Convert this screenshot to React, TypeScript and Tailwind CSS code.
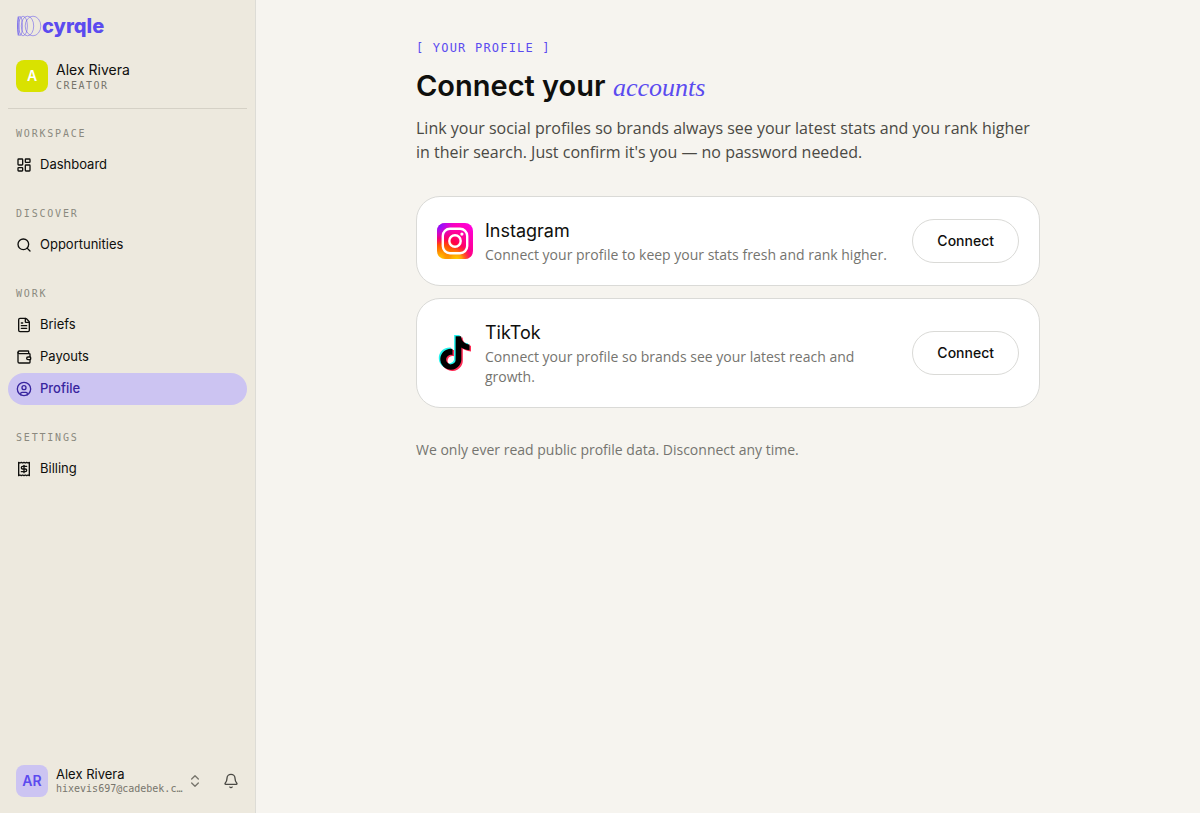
import type { ComponentType } from 'react';
import {
  Bell,
  ChevronsUpDown,
  CircleUser,
  FileText,
  LayoutDashboard,
  Search,
  Wallet,
} from 'lucide-react';

type IconProps = { className?: string };

function Logo() {
  return (
    <span className="flex items-center text-[#5B4BEF]">
      <svg viewBox="0 0 26 24" className="w-[26px] h-6" fill="none" stroke="currentColor" strokeWidth="0.5" aria-hidden="true">
        <ellipse cx="2.3" cy="12" rx="0.8" ry="9.5" />
        <ellipse cx="4" cy="12" rx="2.4" ry="9.7" />
        <ellipse cx="7" cy="12" rx="4.4" ry="9.8" />
        <ellipse cx="11.5" cy="12" rx="6.2" ry="9.8" />
        <ellipse cx="17" cy="12" rx="7.8" ry="9.8" />
      </svg>
      <span className="text-xl leading-6 font-extrabold">cyrqle</span>
    </span>
  );
}

function ReceiptDollar({ className }: IconProps) {
  return (
    <svg viewBox="0 0 24 24" className={className} fill="none" stroke="currentColor" strokeWidth="2" strokeLinecap="round" strokeLinejoin="round" aria-hidden="true">
      <path d="M4 2v20l2-1 2 1 2-1 2 1 2-1 2 1 2-1 2 1V2l-2 1-2-1-2 1-2-1-2 1-2-1-2 1Z" />
      <path d="M16 8h-6a2 2 0 1 0 0 4h4a2 2 0 1 1 0 4H8" />
      <path d="M12 17.5v-11" />
    </svg>
  );
}

function InstagramLogo() {
  return (
    <svg viewBox="0 0 36 36" className="size-9 shrink-0" aria-hidden="true">
      <defs>
        <radialGradient id="ig-base" cx="0.1" cy="1.05" r="1.25">
          <stop offset="0" stopColor="#FFD600" />
          <stop offset="0.14" stopColor="#FFA800" />
          <stop offset="0.34" stopColor="#FF5A00" />
          <stop offset="0.5" stopColor="#FF0045" />
          <stop offset="0.75" stopColor="#FF00A0" />
          <stop offset="1" stopColor="#FF00D8" />
        </radialGradient>
        <radialGradient id="ig-glow" cx="0.55" cy="1.02" r="0.42">
          <stop offset="0" stopColor="#FFD000" />
          <stop offset="0.35" stopColor="#FFB800" stopOpacity="0.85" />
          <stop offset="1" stopColor="#FF5A00" stopOpacity="0" />
        </radialGradient>
        <radialGradient id="ig-corner" cx="0" cy="0" r="0.6">
          <stop offset="0" stopColor="#5A18FF" />
          <stop offset="0.3" stopColor="#9A10FF" stopOpacity="0.9" />
          <stop offset="1" stopColor="#FF00D0" stopOpacity="0" />
        </radialGradient>
      </defs>
      <rect width="36" height="36" rx="8" fill="url(#ig-base)" />
      <rect width="36" height="36" rx="8" fill="url(#ig-glow)" />
      <rect width="36" height="36" rx="8" fill="url(#ig-corner)" />
      <rect x="5.8" y="5.8" width="24.4" height="24.4" rx="7.2" fill="none" stroke="#fff" strokeWidth="2.4" />
      <circle cx="18" cy="18" r="5.7" fill="none" stroke="#fff" strokeWidth="2.4" />
      <circle cx="24.9" cy="11.1" r="1.6" fill="#fff" />
    </svg>
  );
}

const NOTE = 'M12.525.02c1.31-.02 2.61-.01 3.91-.02.08 1.53.63 3.09 1.75 4.17 1.12 1.11 2.7 1.62 4.24 1.79v4.03c-1.44-.05-2.89-.35-4.2-.97-.57-.26-1.1-.59-1.62-.93-.01 2.92.01 5.84-.02 8.75-.08 1.4-.54 2.79-1.35 3.94-1.31 1.92-3.58 3.17-5.91 3.21-1.43.08-2.86-.31-4.08-1.03-2.02-1.19-3.44-3.37-3.65-5.71-.02-.5-.03-1-.01-1.49.18-1.9 1.12-3.72 2.58-4.96 1.66-1.44 3.98-2.13 6.15-1.72.02 1.48-.04 2.96-.04 4.44-.99-.32-2.15-.23-3.02.37-.63.41-1.11 1.04-1.36 1.75-.21.51-.15 1.07-.14 1.61.24 1.64 1.82 3.02 3.5 2.87 1.12-.01 2.19-.66 2.77-1.61.19-.33.4-.67.41-1.06.1-1.79.06-3.57.07-5.36.01-4.03-.01-8.05.02-12.07z';

function TikTokLogo() {
  return (
    <svg viewBox="0 0 36 36" className="size-9 shrink-0" aria-hidden="true">
      <path d={NOTE} fill="#25F4EE" transform="translate(-.4 0) scale(1.4)" />
      <path d={NOTE} fill="#FE2C55" transform="translate(2.6 2.4) scale(1.4)" />
      <path d={NOTE} fill="#000" transform="translate(1.1 1.2) scale(1.4)" />
    </svg>
  );
}

const groups: { label: string; items: { name: string; icon: ComponentType<IconProps>; active?: boolean }[] }[] = [
  { label: 'Workspace', items: [{ name: 'Dashboard', icon: LayoutDashboard }] },
  { label: 'Discover', items: [{ name: 'Opportunities', icon: Search }] },
  {
    label: 'Work',
    items: [
      { name: 'Briefs', icon: FileText },
      { name: 'Payouts', icon: Wallet },
      { name: 'Profile', icon: CircleUser, active: true },
    ],
  },
  { label: 'Settings', items: [{ name: 'Billing', icon: ReceiptDollar }] },
];

const accounts = [
  { name: 'Instagram', desc: 'Connect your profile to keep your stats fresh and rank higher.', logo: InstagramLogo },
  { name: 'TikTok', desc: 'Connect your profile so brands see your latest reach and growth.', logo: TikTokLogo },
];

function Sidebar() {
  return (
    <aside className="w-64 shrink-0 flex flex-col bg-[#EDE9DE] border-r border-[#DDDCD6]">
      <div className="px-2">
        <a href="#" className="flex h-[52px] items-center px-2">
          <Logo />
        </a>
        <div className="flex items-center gap-2 px-2 pt-2 pb-4 border-b border-[#D5D1C6]">
          <div className="size-8 rounded-lg bg-[#D9E200] text-white text-sm font-semibold flex items-center justify-center">A</div>
          <div>
            <p className="text-sm leading-5">Alex Rivera</p>
            <p className="font-['DejaVu_Sans_Mono',monospace] text-[10px] leading-3 tracking-[0.15em] text-[#77756C] uppercase">Creator</p>
          </div>
        </div>
      </div>

      <nav className="flex flex-col gap-4 px-2 pt-2">
        {groups.map((g) => (
          <div key={g.label}>
            <h2 className="flex h-8 items-center px-2 font-['DejaVu_Sans_Mono',monospace] text-[10px] tracking-[0.18em] text-[#8B897F] uppercase">
              {g.label}
            </h2>
            {g.items.map((item) => {
              const Icon = item.icon;
              return (
                <a
                  key={item.name}
                  href="#"
                  aria-current={item.active ? 'page' : undefined}
                  className={`flex h-8 items-center gap-2 px-2 rounded-full text-[13px] ${item.active ? 'bg-[#CCC4F2] text-[#38259F] font-medium' : ''}`}
                >
                  <Icon className="size-4" />
                  {item.name}
                </a>
              );
            })}
          </div>
        ))}
      </nav>

      <div className="mt-auto flex items-center px-2 pb-4">
        <button type="button" className="flex min-w-0 flex-1 items-center pl-2 pr-3 text-left">
          <span className="size-8 mr-2 shrink-0 rounded-lg bg-[#CCC4F2] text-[#5B4BEF] text-sm font-semibold flex items-center justify-center">AR</span>
          <span className="min-w-0 flex-1">
            <span className="block text-[13px] leading-4">Alex Rivera</span>
            <span className="block whitespace-nowrap font-['DejaVu_Sans_Mono',monospace] text-[10px] leading-[14px] text-[#77756C]">hixevis697@cadebek.c…</span>
          </span>
          <ChevronsUpDown className="size-4 shrink-0 text-[#77756C]" />
        </button>
        <button type="button" aria-label="Notifications" className="flex size-8 items-center justify-center text-[#4A4944]">
          <Bell className="size-4" />
        </button>
      </div>
    </aside>
  );
}

export default function App() {
  return (
    <div className="flex min-h-screen bg-[#F6F4EF] text-[#0F0F0D] font-[Inter,'Liberation_Sans',sans-serif]">
      <Sidebar />
      <main className="flex-1 min-w-0">
        <div className="mx-auto max-w-2xl px-6 py-10">
          <p className="font-['DejaVu_Sans_Mono',monospace] text-xs tracking-widest text-[#5B4BEF] uppercase">[ Your profile ]</p>
          <h1 className="mt-3 text-[29px] leading-9 font-semibold">
            Connect your{' '}
            <em className="font-['Liberation_Serif',serif] text-[26px] leading-none font-normal text-[#5B4BEF]">accounts</em>
          </h1>
          <p className="mt-3 max-w-[620px] font-['Open_Sans',sans-serif] text-base text-[#4A4944]">
            Link your social profiles so brands always see your latest stats and you rank higher in their search. Just confirm it's you — no password needed.
          </p>

          <div className="mt-8 flex flex-col gap-3">
            {accounts.map((a) => {
              const AccountLogo = a.logo;
              return (
                <section key={a.name} className="flex items-center gap-3 p-5 rounded-3xl bg-white border border-[#DADAD7]">
                  <AccountLogo />
                  <div className="min-w-0 flex-1">
                    <h2 className="text-lg leading-7">{a.name}</h2>
                    <p className="max-w-[404px] font-['Open_Sans',sans-serif] text-sm text-[#75746F]">{a.desc}</p>
                  </div>
                  <button type="button" className="h-11 px-6 shrink-0 rounded-full border border-[#DADAD7] text-sm font-medium">
                    Connect
                  </button>
                </section>
              );
            })}
          </div>

          <p className="mt-8 font-['Open_Sans',sans-serif] text-sm text-[#75746F]">We only ever read public profile data. Disconnect any time.</p>
        </div>
      </main>
    </div>
  );
}
